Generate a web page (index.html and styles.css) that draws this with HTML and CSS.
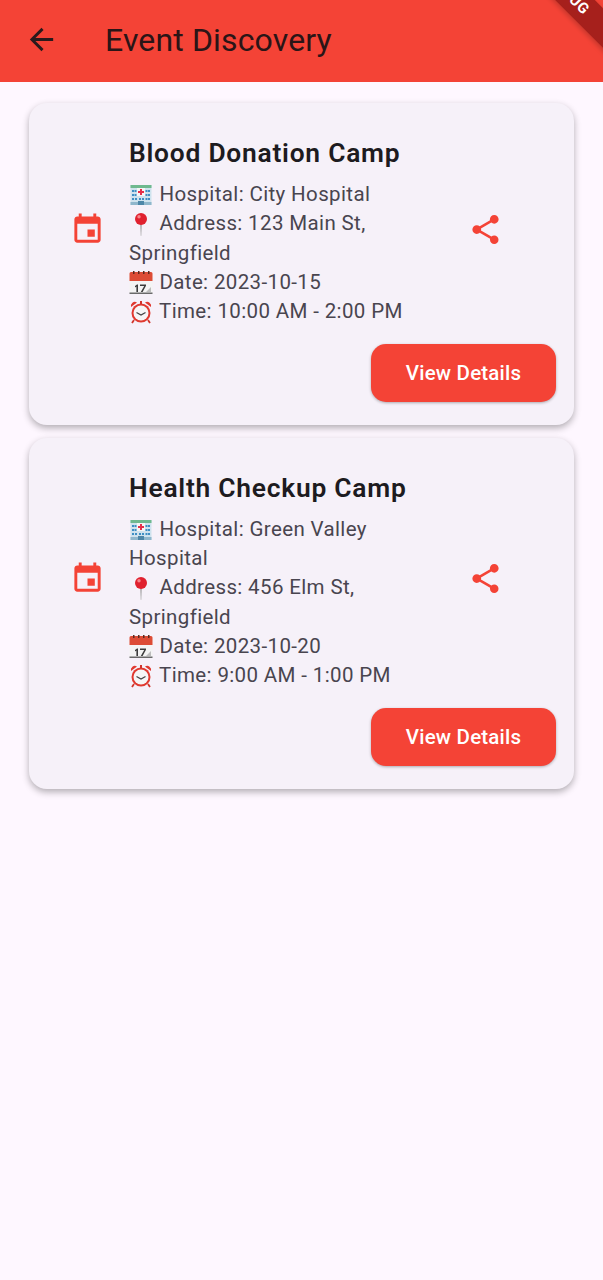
FILE: index.html
```html
<!DOCTYPE html>
<html lang="en">
<head>
<meta charset="utf-8">
<title>Event Discovery</title>
<link rel="stylesheet" href="styles.css">
</head>
<body>
<svg class="defs" width="0" height="0" aria-hidden="true">
  <symbol id="e-hospital" viewBox="0 0 24 24">
    <rect x="1.500" y="2" width="21" height="20" fill="#cfe3ee"/>
    <rect x="1.500" y="2" width="21" height="3" fill="#6fb98f"/>
    <rect x="8" y="5" width="8" height="8" fill="#f6f6f6"/>
    <path d="M11 6h2v2h2v2h-2v2h-2v-2H9V8h2z" fill="#e5304a"/>
    <g fill="#3f8fc4">
      <rect x="3" y="7" width="2" height="2"/><rect x="5.500" y="7" width="2" height="2"/>
      <rect x="16.500" y="7" width="2" height="2"/><rect x="19" y="7" width="2" height="2"/>
      <rect x="3" y="11" width="2" height="2"/><rect x="5.500" y="11" width="2" height="2"/>
      <rect x="16.500" y="11" width="2" height="2"/><rect x="19" y="11" width="2" height="2"/>
      <rect x="3" y="15" width="2" height="2"/><rect x="6" y="15" width="2" height="2"/>
      <rect x="10" y="15" width="2" height="2"/><rect x="13" y="15" width="2" height="2"/>
      <rect x="16.500" y="15" width="2" height="2"/><rect x="19" y="15" width="2" height="2"/>
    </g>
    <rect x="1.500" y="19" width="21" height="3" fill="#8fb7cc"/>
    <rect x="9" y="18" width="6" height="4" fill="#4d87a8"/>
  </symbol>
  <symbol id="e-pin" viewBox="0 0 24 24">
    <path d="M11.300 12h1.400l-.5 12h-.4z" fill="#9a9a9a"/>
    <circle cx="12" cy="7" r="6" fill="#e0212f"/>
    <circle cx="10" cy="4.800" r="1.700" fill="#f7858a"/>
  </symbol>
  <symbol id="e-cal" viewBox="0 0 24 24">
    <rect x="0.500" y="1" width="23" height="22" rx="1.500" fill="#f4f4f4"/>
    <path d="M.5 2.500A1.500 1.500 0 0 1 2 1h20a1.500 1.500 0 0 1 1.500 1.500V10H.5z" fill="#dd4c36"/>
    <rect x="0.500" y="21.500" width="23" height="1.500" fill="#6a6a6a"/>
    <g fill="#5a2a20"><rect x="4" y="0" width="1.500" height="3"/><rect x="9" y="0" width="1.500" height="3"/><rect x="14" y="0" width="1.500" height="3"/><rect x="19" y="0" width="1.500" height="3"/></g>
    <path d="M6 15l2-1.500h1V21H7.400v-5.500L6 16.400zM11 13.500h6v1.300L13.600 21h-1.800l3.400-6.100H11z" fill="#3c3c3c"/>
    <path d="M17 21l5-5v5z" fill="#bdbdbd"/>
  </symbol>
  <symbol id="e-clock" viewBox="0 0 24 24">
    <path d="M2 7a4 4 0 0 1 6-4.500zM22 7a4 4 0 0 0-6-4.500z" fill="#e0392f"/>
    <path d="M5 20l-2 3M19 20l2 3" stroke="#d0342b" stroke-width="1.800"/>
    <circle cx="12" cy="13" r="9.500" fill="#e0392f"/>
    <circle cx="12" cy="13" r="7.500" fill="#f6f6f6"/>
    <path d="M7.500 12.500L12 15l4.500-2.500" fill="none" stroke="#444" stroke-width="1.300"/>
    <rect x="11" y="1" width="2" height="3" fill="#d0342b"/>
  </symbol>
</svg>

<header class="appbar">
  <svg class="icon back" viewBox="0 0 24 24"><path d="M20 11H7.830l5.590-5.590L12 4l-8 8 8 8 1.410-1.410L7.830 13H20v-2z"/></svg>
  <h1 class="appbar-title">Event Discovery</h1>
</header>
<div class="banner"><span>DEBUG</span></div>

<main class="list">
  <article class="card">
    <div class="row">
      <svg class="icon accent" viewBox="0 0 24 24"><path d="M17 12h-5v5h5v-5zM16 1v2H8V1H6v2H5c-1.110 0-1.990.900-1.990 2L3 19c0 1.100.890 2 2 2h14c1.100 0 2-.900 2-2V5c0-1.100-.900-2-2-2h-1V1h-2zm3 18H5V8h14v11z"/></svg>
      <div class="body">
        <h2 class="title">Blood Donation Camp</h2>
        <p class="info"><svg class="emoji"><use href="#e-hospital"/></svg> Hospital: City Hospital<br><svg class="emoji"><use href="#e-pin"/></svg> Address: 123 Main St, Springfield<br><svg class="emoji"><use href="#e-cal"/></svg> Date: 2023-10-15<br><svg class="emoji"><use href="#e-clock"/></svg> Time: 10:00 AM - 2:00 PM</p>
      </div>
      <svg class="icon accent" viewBox="0 0 24 24"><path d="M18 16.080c-.760 0-1.440.300-1.960.770L8.910 12.700c.050-.230.090-.460.090-.700s-.040-.470-.090-.700l7.050-4.110c.540.500 1.250.810 2.040.810 1.660 0 3-1.340 3-3s-1.340-3-3-3-3 1.340-3 3c0 .240.040.470.090.700L8.040 9.810C7.500 9.310 6.790 9 6 9c-1.660 0-3 1.340-3 3s1.340 3 3 3c.790 0 1.500-.310 2.040-.810l7.120 4.160c-.050.210-.080.430-.080.650 0 1.610 1.310 2.920 2.920 2.920 1.610 0 2.920-1.310 2.920-2.920s-1.310-2.920-2.920-2.920z"/></svg>
    </div>
    <button class="btn">View Details</button>
  </article>

  <article class="card">
    <div class="row">
      <svg class="icon accent" viewBox="0 0 24 24"><path d="M17 12h-5v5h5v-5zM16 1v2H8V1H6v2H5c-1.110 0-1.990.900-1.990 2L3 19c0 1.100.890 2 2 2h14c1.100 0 2-.900 2-2V5c0-1.100-.900-2-2-2h-1V1h-2zm3 18H5V8h14v11z"/></svg>
      <div class="body">
        <h2 class="title">Health Checkup Camp</h2>
        <p class="info"><svg class="emoji"><use href="#e-hospital"/></svg> Hospital: Green Valley Hospital<br><svg class="emoji"><use href="#e-pin"/></svg> Address: 456 Elm St, Springfield<br><svg class="emoji"><use href="#e-cal"/></svg> Date: 2023-10-20<br><svg class="emoji"><use href="#e-clock"/></svg> Time: 9:00 AM - 1:00 PM</p>
      </div>
      <svg class="icon accent" viewBox="0 0 24 24"><path d="M18 16.080c-.760 0-1.440.300-1.960.770L8.910 12.700c.050-.230.090-.460.090-.700s-.040-.470-.090-.700l7.050-4.110c.540.500 1.250.810 2.040.810 1.660 0 3-1.340 3-3s-1.340-3-3-3-3 1.340-3 3c0 .240.040.470.090.700L8.040 9.810C7.500 9.310 6.790 9 6 9c-1.660 0-3 1.340-3 3s1.340 3 3 3c.790 0 1.500-.310 2.040-.810l7.120 4.160c-.050.210-.080.430-.080.650 0 1.610 1.310 2.920 2.920 2.920 1.610 0 2.920-1.310 2.920-2.920s-1.310-2.920-2.920-2.920z"/></svg>
    </div>
    <button class="btn">View Details</button>
  </article>
</main>
</body>
</html>
```
FILE: styles.css
```css
* { box-sizing: border-box; }
html, body { margin: 0; height: 100%; }
body {
  position: relative;
  overflow: hidden;
  background: #fef7ff;
  font-family: Roboto, "Liberation Sans", sans-serif;
  color: #1d1b20;
}
.defs { position: absolute; }
.icon { flex: none; width: 35px; height: 35px; display: block; }
.accent { fill: #f44336; margin-bottom: 2px; }
.appbar {
  display: flex;
  align-items: center;
  gap: 28px;
  height: 82px;
  padding: 0 0 3px 23px;
  background: #f44336;
}
.back { fill: #2a1a1c; margin-right: 18px; margin-left: 1px; }
.appbar-title {
  margin: 0;
  font-size: 32px;
  font-weight: 400;
  line-height: 40px;
  letter-spacing: .14px;
  color: #2a1517;
}
.banner {
  position: absolute;
  top: 0;
  right: 0;
  width: 80px;
  height: 60px;
  overflow: hidden;
}
.banner span {
  position: absolute;
  top: -20px;
  left: -34px;
  width: 160px;
  height: 28px;
  line-height: 28px;
  text-align: center;
  font-size: 15px;
  font-weight: 700;
  letter-spacing: .5px;
  color: #fff;
  background: #a6201c;
  box-shadow: 0 2px 5px rgba(0, 0, 0, .2);
  transform: rotate(45deg);
}
.list {
  display: flex;
  flex-direction: column;
  gap: 13px;
  padding: 21px 29px 0;
}
.card {
  display: flex;
  flex-direction: column;
  background: #f6f1f9;
  border-radius: 18px;
  padding: 31px 18px 23px 0;
  box-shadow: 0 3px 7px rgba(0, 0, 0, .3);
}
.row {
  display: flex;
  align-items: center;
  padding-left: 41px;
  margin-bottom: 17px;
}
.body {
  width: 304px;
  margin: 0 35px 0 24px;
}
.title {
  margin: 0 0 8px;
  font-size: 26.4px;
  line-height: 38px;
  font-weight: 600;
  letter-spacing: .75px;
  color: #1d1b20;
}
.info {
  margin: 0;
  font-size: 20.5px;
  line-height: 29.33px;
  letter-spacing: .37px;
  color: #49454f;
}
.emoji {
  display: inline-block;
  width: 24px;
  height: 24px;
  margin-right: 1px;
  vertical-align: -6px;
}
.btn {
  align-self: flex-end;
  width: 185px;
  height: 58px;
  border: 0;
  border-radius: 15px;
  background: #f44336;
  color: #fff;
  font: 500 20.5px Roboto, "Liberation Sans", sans-serif;
  letter-spacing: .2px;
  box-shadow: 0 1px 3px rgba(0, 0, 0, .3);
}
```
